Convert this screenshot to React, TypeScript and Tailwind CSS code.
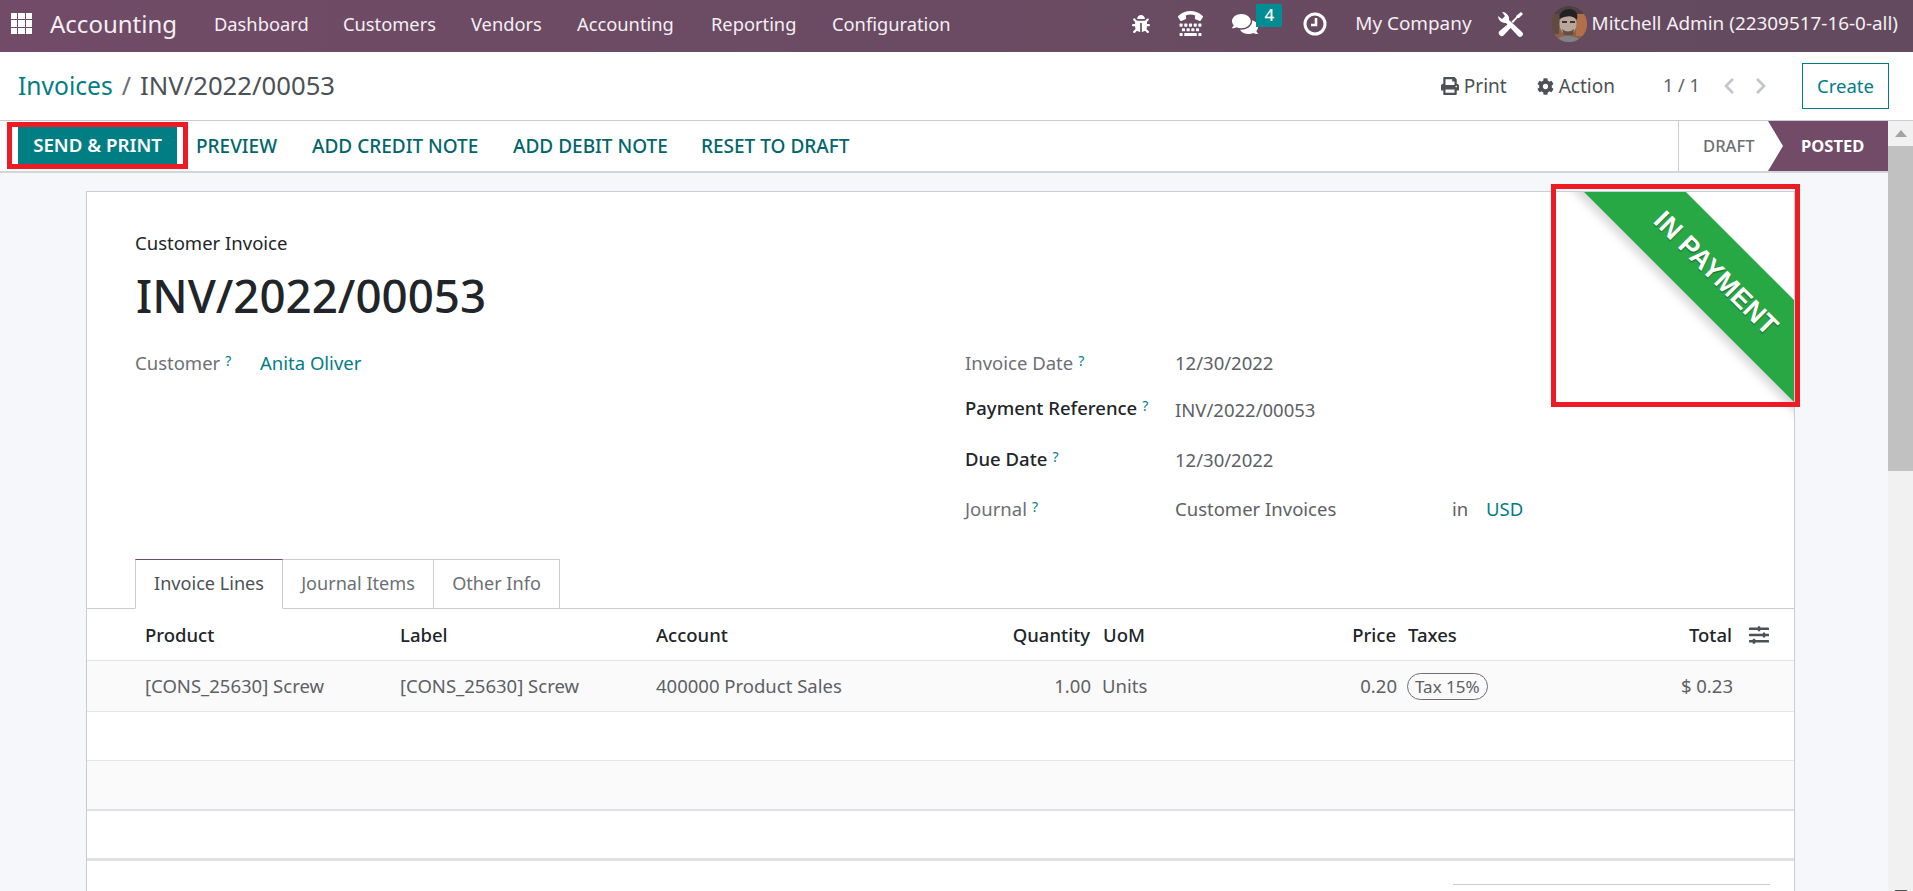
import { FaBug, FaTty, FaComments, FaPrint, FaCog, FaChevronLeft, FaChevronRight, FaSlidersH } from "react-icons/fa";

const NAV = [
  { label: "Dashboard", cls: "w-[129px]" },
  { label: "Customers", cls: "w-[128px]" },
  { label: "Vendors", cls: "w-[106px]" },
  { label: "Accounting", cls: "w-[134px]" },
  { label: "Reporting", cls: "w-[121px]" },
  { label: "Configuration", cls: "" },
];

const ACTIONS = [
  { label: "PREVIEW", cls: "w-[116px]" },
  { label: "ADD CREDIT NOTE", cls: "w-[201px]" },
  { label: "ADD DEBIT NOTE", cls: "w-[188px]" },
  { label: "RESET TO DRAFT", cls: "" },
];

const ROW = "grid grid-cols-[313px_256px_256px_184px_104px_201px_99px_237px_57px] items-center";

function Help() {
  return <sup className="ml-[5px] text-[14px] text-[#017e84] font-normal relative -top-[4px]">?</sup>;
}

function Avatar() {
  return (
    <svg width="36" height="36" viewBox="0 0 36 36" className="rounded-full">
      <rect width="36" height="36" fill="#8f5f46" />
      <rect x="0" y="0" width="36" height="10" fill="#4a4140" />
      <rect x="25" y="8" width="11" height="22" fill="#b0704c" />
      <rect x="0" y="8" width="8" height="20" fill="#5f4a44" />
      <ellipse cx="17" cy="18" rx="8.5" ry="11" fill="#b9a79b" />
      <path d="M8 13 Q9 2 20 3 Q28 5 26 14 Q20 7 8 13Z" fill="#232123" />
      <rect x="11" y="15" width="5" height="2" fill="#38353a" />
      <rect x="19" y="15" width="5" height="2" fill="#38353a" />
      <path d="M11 23 Q17 28 23 23 L22 29 L13 29Z" fill="#5f4f48" />
      <path d="M4 36 Q8 29 17 30 Q27 30 30 36Z" fill="#7f8387" />
    </svg>
  );
}

function ClockIcon() {
  return (
    <svg width="24" height="24" viewBox="0 0 24 24" fill="none" stroke="white">
      <circle cx="12" cy="12" r="10" strokeWidth="3" />
      <path d="M13 6 V13 H8" strokeWidth="2.6" />
    </svg>
  );
}

function ToolsIcon() {
  return (
    <svg width="27" height="26" viewBox="0 0 27 26" fill="white">
      <path d="M1 5 L5 8 L8 5 L5 1 A7 7 0 0 1 12 9 L25 21 A2.5 2.5 0 0 1 21 25 L9 12 A7 7 0 0 1 1 5Z" />
      <path d="M24 1 L26 3 L22 7 L20.5 7 L16 12 L14.5 10.5 L19 6 L19.5 4.5Z" />
      <path d="M13 11.5 L16 14.5 L7 24 A3 3 0 0 1 2.5 20Z" />
    </svg>
  );
}

function Ribbon() {
  return (
    <div className="absolute top-0 right-0 w-[240px] h-[240px] overflow-hidden">
      <div className="absolute left-[-38px] top-[45px] w-[400px] h-[72px] rotate-45 bg-[#28a745] shadow-[0_6px_10px_rgba(0,0,0,0.16)] flex items-center justify-center">
        <span className="font-['Liberation_Sans',sans-serif] font-bold text-[27px] text-white [text-shadow:1px_1px_1px_rgba(0,0,0,0.3)]">IN PAYMENT</span>
      </div>
    </div>
  );
}

function Field({ label, strong, children, cls }: { label: string; strong?: boolean; children: React.ReactNode; cls: string }) {
  return (
    <div className={`flex items-center h-[30px] ${cls}`}>
      <div className={`w-[210px] ${strong ? "text-[#212529] font-medium" : "text-[#6c7075]"}`}>
        {label}
        <Help />
      </div>
      {children}
    </div>
  );
}

export default function App() {
  return (
    <div className="h-screen overflow-hidden flex flex-col bg-white font-['Noto_Sans',sans-serif] text-[18.5px] text-[#5c6166]">
      {/* main navbar */}
      <header className="h-[52px] pb-[5px] shrink-0 flex items-center bg-gradient-to-r from-[#714b67] to-[#634a5e] text-white">
        <div className="ml-[11px] w-[21px] h-[21px] grid grid-cols-3 gap-px">
          {Array.from({ length: 9 }).map((_, i) => (
            <div key={i} className="bg-white" />
          ))}
        </div>
        <span className="ml-[18px] w-[164px] text-[24px] text-[#f4eff3]">Accounting</span>
        <nav className="flex items-center text-[18.3px] text-[#f4eff3]">
          {NAV.map((n) => (
            <span key={n.label} className={n.cls}>{n.label}</span>
          ))}
        </nav>
        <div className="ml-auto flex items-center text-[18.9px]">
          <FaBug className="text-[18px] mr-[28px]" />
          <FaTty className="text-[25px] mr-[29px]" />
          <div className="relative mr-[45px]">
            <FaComments className="text-[26px]" />
            <span className="absolute left-[24px] top-[-7px] w-[26px] h-[23px] flex items-center justify-center bg-[#008c93] text-[17px] font-medium">4</span>
          </div>
          <div className="mr-[28px]">
            <ClockIcon />
          </div>
          <span className="mr-[25px] text-[#f4eff3]">My Company</span>
          <div className="mr-[27px]">
            <ToolsIcon />
          </div>
          <Avatar />
          <span className="ml-[5px] mr-[15px] text-[#f4eff3]">Mitchell Admin (22309517-16-0-all)</span>
        </div>
      </header>

      {/* control panel */}
      <div className="h-[69px] shrink-0 flex items-center border-b border-[#c9ccd2]">
        <div className="ml-[18px] flex items-center">
          <span className="text-[24.6px] text-[#017e84]">Invoices</span>
          <span className="mx-[9px] text-[25px] text-[#6c7075]">/</span>
          <span className="text-[25.7px] text-[#4c5156]">INV/2022/00053</span>
        </div>
        <div className="ml-auto flex items-center text-[#4c5156]">
          <FaPrint className="text-[18px] mr-[5px]" />
          <span className="mr-[30px] text-[19px]">Print</span>
          <FaCog className="text-[17px] mr-[5px]" />
          <span className="mr-[48px] text-[19px]">Action</span>
          <span className="mr-[20px] text-[18.2px] text-[#5c6166]">1 / 1</span>
          <FaChevronLeft className="text-[18px] mr-[14px] text-[#c3c6ca]" />
          <FaChevronRight className="text-[18px] mr-[32px] text-[#c3c6ca]" />
          <button className="w-[87px] h-[46px] mr-[24px] border border-[#017e84] text-[#017e84] bg-white">Create</button>
        </div>
      </div>

      <div className="flex-1 min-h-0 flex">
        <div className="flex-1 min-w-0 flex flex-col">
          {/* action bar */}
          <div className="h-[52px] shrink-0 flex items-center border-b-2 border-[#d3d5da] bg-white text-[19px]">
            <div className="ml-[7px] border-[5px] border-[#ed1c24] w-[181px] h-[47px] -mt-[2px] flex items-center justify-center bg-white">
              <button className="w-[159px] h-[37px] bg-[#017e84] text-white font-semibold text-[18.7px]">SEND &amp; PRINT</button>
            </div>
            <div className="ml-[8px] flex items-center font-medium text-[#01666b]">
              {ACTIONS.map((a) => (
                <span key={a.label} className={a.cls}>{a.label}</span>
              ))}
            </div>
            <div className="ml-auto h-[50px] flex items-center self-start">
              <div className="w-[90px] h-[50px] border-l border-[#c9ccd2] flex items-center pl-[24px] text-[16.6px] font-medium text-[#6c7075]">DRAFT</div>
              <div className="w-[120px] h-[50px] bg-[#714b67] [clip-path:polygon(0_0,100%_0,100%_100%,0_100%,15px_50%)] flex items-center pl-[33px] text-[16.5px] font-bold text-white">POSTED</div>
            </div>
          </div>

          {/* form view */}
          <div className="flex-1 min-h-0 overflow-hidden bg-[#f6f7fb] pt-[18px] pl-[86px] pr-[93px]">
            <div className="relative h-[760px] bg-white border border-[#c9ccd2] pt-[39px]">
              <Ribbon />
              <div className="absolute -top-[8px] -right-[6px] w-[249px] h-[223px] border-[5px] border-[#ed1c24]" />
              <div className="pl-[48px] h-[24px] leading-[24px] text-[#212529]">Customer Invoice</div>
              <h1 className="pl-[49px] mt-[12px] h-[56px] leading-[56px] text-[45.7px] font-medium text-[#212529]">INV/2022/00053</h1>
              <div className="mt-[25px] pl-[48px] flex">
                <div className="w-[830px]">
                  <Field label="Customer" cls="!w-auto">
                    <span className="-ml-[85px] text-[#017e84]">Anita Oliver</span>
                  </Field>
                </div>
                <div>
                  <Field label="Invoice Date" cls="">
                    <span>12/30/2022</span>
                  </Field>
                  <Field label="Payment Reference" strong cls="mt-[15px]">
                    <span className="mt-[3px]">INV/2022/00053</span>
                  </Field>
                  <Field label="Due Date" strong cls="mt-[21px]">
                    <span className="mt-[2px]">12/30/2022</span>
                  </Field>
                  <Field label="Journal" cls="mt-[20px]">
                    <span className="w-[277px]">Customer Invoices</span>
                    <span className="w-[34px]">in</span>
                    <span className="text-[#017e84]">USD</span>
                  </Field>
                </div>
              </div>

              {/* tabs */}
              <div className="mt-[35px] h-[50px] flex items-end border-b border-[#c9ccd2] text-[18.1px]">
                <div className="ml-[48px] w-[148px] h-[50px] -mb-px flex items-center justify-center bg-white border border-[#c9ccd2] border-t-[#714b67] border-b-white text-[#4c5156]">Invoice Lines</div>
                <div className="w-[151px] h-[49px] flex items-center justify-center border-t border-r border-[#c9ccd2] text-[#6c7075]">Journal Items</div>
                <div className="w-[126px] h-[49px] flex items-center justify-center border-t border-r border-[#c9ccd2] text-[#6c7075]">Other Info</div>
              </div>

              {/* invoice lines */}
              <div className={`${ROW} h-[52px] border-b border-[#dee2e6] text-[#212529] font-medium`}>
                <span className="pl-[58px]">Product</span>
                <span>Label</span>
                <span>Account</span>
                <span className="text-right pr-[6px]">Quantity</span>
                <span className="pl-[7px]">UoM</span>
                <span className="text-right pr-[5px]">Price</span>
                <span className="pl-[7px]">Taxes</span>
                <span className="text-right pr-[5px]">Total</span>
                <FaSlidersH className="ml-[12px] text-[20px] text-[#4c5156]" />
              </div>
              <div className={`${ROW} h-[51px] border-b border-[#e4e6ea] bg-[#fafafa]`}>
                <span className="pl-[58px]">[CONS_25630] Screw</span>
                <span>[CONS_25630] Screw</span>
                <span>400000 Product Sales</span>
                <span className="text-right pr-[5px]">1.00</span>
                <span className="pl-[6px]">Units</span>
                <span className="text-right pr-[4px]">0.20</span>
                <span className="pl-[6px] whitespace-nowrap">
                  <span className="inline-flex items-center h-[27px] px-[7px] rounded-full border border-[#6c7075] text-[17px] leading-none">Tax 15%</span>
                </span>
                <span className="text-right pr-[4px]">$ 0.23</span>
                <span />
              </div>
              <div className="h-[49px] border-b border-[#e4e6ea]" />
              <div className="h-[50px] border-b-[2px] border-[#dfe0e5] bg-[#fafafa]" />
              <div className="h-[50px] border-b-[3px] border-[#dfe0e5]" />
              <div className="mt-[23px] ml-[1366px] w-[317px] border-t border-[#c9ccd2]" />
            </div>
          </div>
        </div>

        {/* page scrollbar */}
        <div className="w-[25px] shrink-0 flex flex-col items-center bg-[#f1f1f1]">
          <div className="h-[25px] w-full flex items-center justify-center">
            <div className="w-0 h-0 border-x-[6px] border-x-transparent border-b-[7px] border-b-[#a3a3a3]" />
          </div>
          <div className="w-full h-[325px] bg-[#c1c1c1]" />
          <div className="mt-auto w-[12px] h-px bg-[#505050]" />
        </div>
      </div>
    </div>
  );
}
